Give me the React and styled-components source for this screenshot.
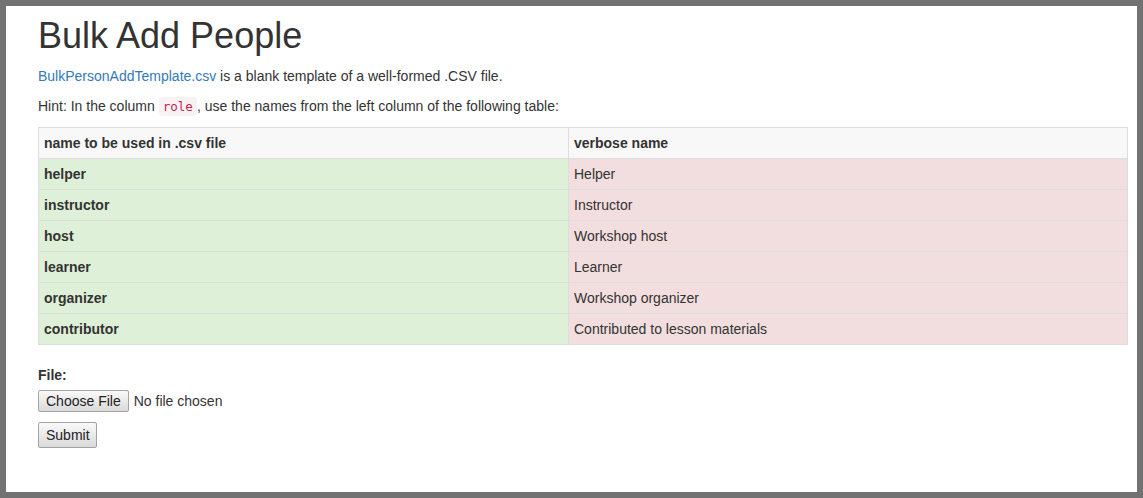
import styled, { createGlobalStyle } from "styled-components"

const roles = [
  { name: "helper", verbose: "Helper" },
  { name: "instructor", verbose: "Instructor" },
  { name: "host", verbose: "Workshop host" },
  { name: "learner", verbose: "Learner" },
  { name: "organizer", verbose: "Workshop organizer" },
  { name: "contributor", verbose: "Contributed to lesson materials" },
]

const GlobalStyle = createGlobalStyle`
  html, body {
    margin: 0;
    height: 100%;
  }

  body {
    font-family: "Liberation Sans", Arial, sans-serif;
    font-size: 14px;
    line-height: 20px;
    color: #333;
  }

  * {
    box-sizing: border-box;
  }
`

const Frame = styled.div`
  min-height: 100vh;
  padding: 6px;
  background-color: #727272;
  display: flex;
`

const Page = styled.main`
  flex: 1;
  background-color: #fff;
  padding: 0 9px 0 32px;
`

const Title = styled.h1`
  margin: 10px 0 10px;
  font-size: 36px;
  font-weight: 500;
  line-height: 40px;
`

const Paragraph = styled.p`
  margin: 0 0 10px;
`

const Link = styled.a`
  color: #337ab7;
  text-decoration: none;
`

const Code = styled.code`
  padding: 2px 4px;
  font-family: "DejaVu Sans Mono", Menlo, monospace;
  font-size: 90%;
  color: #c7254e;
  background-color: #f9f2f4;
  border-radius: 4px;
`

const Table = styled.table`
  width: 100%;
  margin: 2px 0 20px;
  border-collapse: collapse;
  border: 1px solid #ddd;

  th,
  td {
    padding: 5px;
    line-height: 20px;
    text-align: left;
    vertical-align: top;
    border: 1px solid #ddd;
  }

  thead th {
    background-color: #f8f8f8;
  }

  thead th:first-child {
    width: 530px;
  }
`

const Row = styled.tr`
  th {
    background-color: #dff0d8;
  }

  td {
    background-color: #f2dede;
  }
`

const Label = styled.label`
  display: block;
  margin-bottom: 5px;
  font-weight: bold;
`

const FileField = styled.div`
  display: flex;
  align-items: center;
  margin-bottom: 10px;
`

const HiddenInput = styled.input`
  display: none;
`

const Button = styled.button`
  font-family: "Liberation Sans", Arial, sans-serif;
  font-size: 14px;
  line-height: ${(p) => (p.$compact ? "18px" : "20px")};
  padding: ${(p) => (p.$compact ? "1px 7px" : "2px 6px 2px 7px")};
  color: #222;
  background: linear-gradient(#f9f9f9, #dadada);
  border: 1px solid #a3a3a3;
  border-radius: 2px;
  cursor: default;
`

const FileName = styled.span`
  margin-left: 5px;
  line-height: 20px;
`

const App = () => {
  return (
    <>
      <GlobalStyle />
      <Frame>
        <Page>
          <Title>Bulk Add People</Title>
          <Paragraph>
            <Link href="#">BulkPersonAddTemplate.csv</Link> is a blank template of a well-formed .CSV file.
          </Paragraph>
          <Paragraph>
            Hint: In the column <Code>role</Code>, use the names from the left column of the following table:
          </Paragraph>
          <Table>
            <thead>
              <tr>
                <th>name to be used in .csv file</th>
                <th>verbose name</th>
              </tr>
            </thead>
            <tbody>
              {roles.map((role) => (
                <Row key={role.name}>
                  <th scope="row">{role.name}</th>
                  <td>{role.verbose}</td>
                </Row>
              ))}
            </tbody>
          </Table>
          <form onSubmit={(e) => e.preventDefault()}>
            <Label htmlFor="csv_file">File:</Label>
            <FileField>
              <Button type="button" $compact>
                Choose File
              </Button>
              <HiddenInput id="csv_file" type="file" />
              <FileName>No file chosen</FileName>
            </FileField>
            <Button type="submit">Submit</Button>
          </form>
        </Page>
      </Frame>
    </>
  )
}

export default App
